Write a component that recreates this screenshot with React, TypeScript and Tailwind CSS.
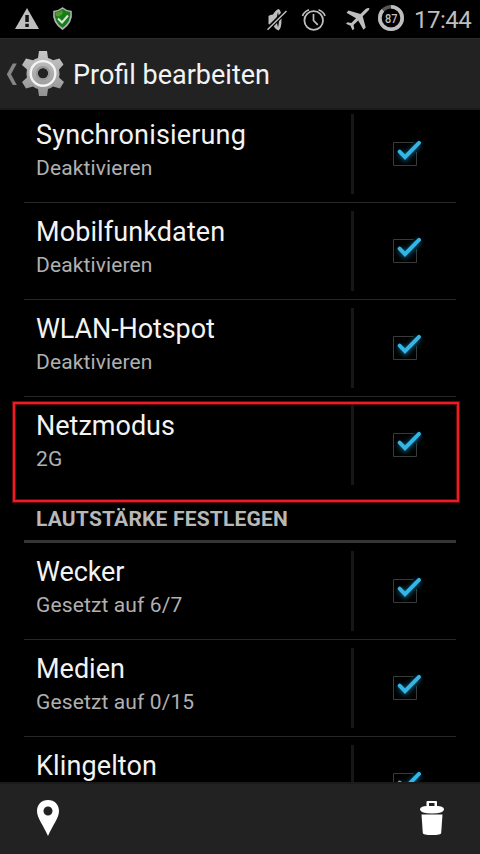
import React from "react";

function CheckBox() {
  return (
    <svg className="h-[48px] w-[48px]" viewBox="0 0 48 48" fill="none">
      <defs>
        <filter id="glow" x="-50%" y="-50%" width="200%" height="200%">
          <feGaussianBlur stdDeviation="2.6" />
        </filter>
      </defs>
      <path d="M32.5 12.5H12.5V35.5H35.5V22" stroke="#3a3a3a" />
      <path d="M18.5 22.5L24 28L38 14" stroke="#0c526c" strokeWidth="6" filter="url(#glow)" />
      <path d="M18.6 21.6L24 27.2L38 12.9" stroke="#33b5e5" strokeWidth="4" strokeLinecap="round" />
    </svg>
  );
}

type RowProps = { title: string; summary?: string; last?: boolean; tracking?: string };

function Row({ title, summary, last, tracking = "tracking-normal" }: RowProps) {
  return (
    <div className={`mx-6 flex h-[97px] shrink-0 ${last ? "" : "border-b border-[#282828]"}`}>
      <div className="flex-1 pl-3 pt-[13px]">
        <div className={`whitespace-nowrap text-[27px] leading-8 text-[#f3f3f3] ${tracking}`}>{title}</div>
        {summary && (
          <div className="mt-[4px] whitespace-nowrap text-[21px] leading-[26px] tracking-[0.12px] text-[#b0b0b0]">{summary}</div>
        )}
      </div>
      <div className="mt-2 h-[80px] w-[3px] bg-[#171717]" />
      <div className="flex w-[102px] justify-start pl-[27px] pt-[24px]">
        <CheckBox />
      </div>
    </div>
  );
}

function StatusBar() {
  return (
    <div className="flex h-[38px] shrink-0 items-center bg-black text-[#bebebe]">
      <svg className="h-[38px] w-[240px]" viewBox="0 0 240 38">
        <path d="M27 8L39 29H15Z" fill="#bebebe" />
        <path d="M25.3 15H28.8V22H25.3ZM25.3 23.8H28.8V27H25.3Z" fill="#111" />
        <path d="M62.5 8Q66 11 71 11.5Q72.5 22 62.5 29Q52.5 22 54 11.5Q59 11 62.5 8Z" fill="#187c18" stroke="#aeb2b0" strokeWidth="1.6" />
        <path d="M55.500 12.500Q60 12 62.500 10V14L59 16.500L56 16Z" fill="#519b30" />
        <path d="M58 18.5L62 22.5L68 15.5" fill="none" stroke="#d8e8d5" strokeWidth="2" />
      </svg>
      <svg className="h-[38px] w-[170px]" viewBox="240 0 170 38" fill="none" stroke="#bebebe">
        <path d="M268.500 16Q270 14.500 273 14.500Q275.500 10 278.500 9Q281.500 10 281.500 19.500Q281.500 29 278.500 30.500Q275.500 29.500 273 25.500Q270 25.500 268.500 24Z" fill="#bebebe" stroke="none" />
        <path d="M278 12Q275.500 19.500 278 27.500Q280.200 19.500 278 12Z" fill="#141414" stroke="none" />
        <path d="M267 30L286 11" stroke="#000" strokeWidth="4.400" />
        <path d="M267.500 29.700L286.500 11" strokeWidth="1.500" />
        <circle cx="313.700" cy="20.500" r="9.300" strokeWidth="1.800" />
        <path d="M313.500 14V20.500L317.800 24.800M302.500 16Q304 11.500 309 9.700M318.500 9.700Q323.500 11.500 325 16" strokeWidth="1.700" />
        <path d="M369.500 8.300Q367 7.500 364.500 10L360.500 14L348.500 10.500L346.500 12.800L356 18.300L351.300 23L347.500 22.200L346 23.700L350.500 25.800L352.500 30.200L354.300 28.800L353.500 25L358.200 20.500L363.500 29.700L365.700 27.500L362.700 16.200L367 12Q369.500 10 369.500 8.300Z" fill="#bebebe" stroke="none" />
        <circle cx="391" cy="18" r="11.200" stroke="#555" strokeWidth="3.600" />
        <circle cx="391" cy="18" r="11.200" strokeWidth="3.600" pathLength="100" strokeDasharray="87 13" transform="rotate(-90 391 18)" />
        <text x="391.200" y="23" textAnchor="middle" fill="#bebebe" stroke="none" fontSize="13.500" fontWeight="500" textLength="12.500" lengthAdjust="spacingAndGlyphs">87</text>
      </svg>
      <span className="ml-[4px] whitespace-nowrap pt-[2px] text-[24px] leading-[36px] tracking-[-0.5px]">17:44</span>
    </div>
  );
}

function ActionBar() {
  return (
    <div className="flex h-[72px] shrink-0 items-center border-b-2 border-t border-b-[#1a1c1b] border-t-[#2b2b2b] bg-[#222222]">
      <svg className="h-[70px] w-[73px]" viewBox="0 39 73 70">
        <defs>
          <linearGradient id="gear" x1="0" y1="0" x2="0" y2="1">
            <stop offset="0" stopColor="#c8c8c8" />
            <stop offset="1" stopColor="#929292" />
          </linearGradient>
        </defs>
        <path d="M12.800 63.500H16.800L11 74.300L16.800 85H12.800L6.800 74.300Z" fill="#858585" />
        <path
          fill="url(#gear)"
          fillRule="evenodd"
          d="M39 51H47L48 58Q51 58.800 53 60.300L59.500 58.500L63.500 64.500L59 69.500Q60 73.500 59 77.500L64 82L60 88.500L53 86.500Q51 88 48 89L47 96H39L38 89Q35 88 33 86.500L26 88.500L22 82L27 77.500Q26 73.500 27 69.500L22 65L26 58.500L33 60.300Q35 58.800 38 58ZM43 68A5.200 5.200 0 1 0 43 78.400A5.200 5.200 0 1 0 43 68Z"
        />
        <circle cx="43" cy="73.400" r="12.300" fill="none" stroke="#f4f4f4" strokeWidth="2.400" />
        <circle cx="43" cy="73.200" r="6.200" fill="none" stroke="#989898" strokeWidth="2" />
      </svg>
      <h1 className="whitespace-nowrap pt-[2px] text-[27px] leading-8 text-[#f3f3f3]">Profil bearbeiten</h1>
    </div>
  );
}

function BottomBar() {
  return (
    <div className="flex h-[72px] shrink-0 items-center justify-between border-t-2 border-[#1b1b1b] bg-[#222222]">
      <svg className="h-[70px] w-24" viewBox="0 784 96 70">
        <path fillRule="evenodd" d="M48 800C41.500 800 37 804.500 37 811C37 818 43.500 825.500 48 836C52.500 825.500 59 818 59 811C59 804.500 54.500 800 48 800ZM48 806.500A4.500 4.500 0 1 1 48 815.500A4.500 4.500 0 1 1 48 806.500Z" fill="#fff" />
      </svg>
      <svg className="h-[70px] w-24" viewBox="384 784 96 70" fill="#fff">
        <path fillRule="evenodd" d="M426.500 807V802Q426.500 801 427.500 801H436Q437 801 437 802V807ZM429 806H434.500V803H429Z" />
        <path d="M420 809.500Q420 806 427 806H437Q444 806 444 809.500Q443.500 813.500 432 813.500Q420.500 813.500 420 809.500Z" />
        <path d="M421.500 814.500H442.500L441.200 833Q441 835 432 835Q423 835 422.800 833Z" />
      </svg>
    </div>
  );
}

export default function App() {
  return (
    <div className="relative flex h-[854px] w-[480px] flex-col overflow-hidden bg-black font-['Roboto',sans-serif]">
      <StatusBar />
      <ActionBar />
      <main className="flex min-h-0 flex-1 flex-col overflow-hidden">
        <div className="-mt-1 flex flex-col">
          <Row title="Synchronisierung" summary="Deaktivieren" tracking="tracking-[0.16px]" />
          <Row title="Mobilfunkdaten" summary="Deaktivieren" tracking="tracking-[0.1px]" />
          <Row title="WLAN-Hotspot" summary="Deaktivieren" tracking="tracking-[-0.1px]" />
          <Row title="Netzmodus" summary="2G" last />
          <h2 className="mx-6 h-[49px] shrink-0 whitespace-nowrap border-b-[3px] border-[#353535] pl-3 pt-[12px] text-[21px] font-bold leading-[26px] tracking-[0.18px] text-[#b8b8b8]">LAUTSTÄRKE FESTLEGEN</h2>
          <Row title="Wecker" summary="Gesetzt auf 6/7" tracking="tracking-[-0.1px]" />
          <Row title="Medien" summary="Gesetzt auf 0/15" />
          <Row title="Klingelton" tracking="tracking-[0.12px]" />
        </div>
      </main>
      <BottomBar />
      <div className="pointer-events-none absolute left-[13px] top-[402px] h-[100px] w-[446px] border-2 border-[#ed1c24] shadow-[0_0_0_1px_#65090d,inset_0_0_0_1px_#65090d]" />
    </div>
  );
}
